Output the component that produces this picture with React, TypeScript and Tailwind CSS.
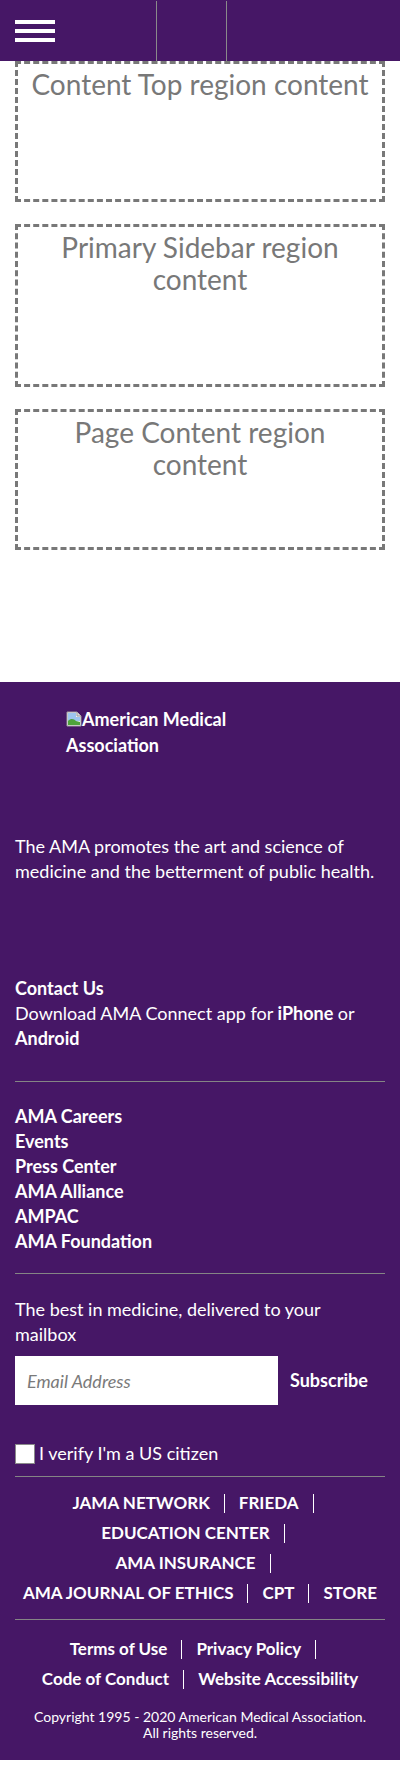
import type { ReactNode } from 'react';

const purple = 'bg-[#461766]';

const RegionBox = ({ title, height }: { title: string; height: string }) => {
  return (
    <div
      className={`border-[3px] border-dashed border-[#787878] text-center text-[28px] leading-[32px] text-[#787878] pt-[4px] px-[8px] ${height}`}
    >
      {title}
    </div>
  );
};

const Sep = () => (
  <span className="mx-[14px] inline-block h-[19px] w-px bg-white align-[-4px]"></span>
);

const LinkRow = ({ children }: { children: ReactNode }) => (
  <div className="flex items-center justify-center whitespace-nowrap">{children}</div>
);

const BrokenImage = () => (
  <svg width="16" height="16" viewBox="0 0 16 16" className="inline-block align-[-1px]">
    <path d="M1 1h10l4 4v10H1z" fill="#f4f4f4" stroke="#9a9a9a" strokeWidth="1" />
    <path d="M2 2h8v4h4v4H2z" fill="#9ec6ee" />
    <path d="M2 14V10c3-3 6-2 8 0l4 1v3z" fill="#4ea33b" />
    <path d="M11 1v4h4" fill="#dcdcdc" stroke="#9a9a9a" strokeWidth="1" />
  </svg>
);

const App = () => {
  return (
    <div className="w-[400px] bg-white font-['Lato',sans-serif]">
      {/* header */}
      <header className={`flex h-[61px] items-stretch ${purple}`}>
        <div className="flex w-[156px] items-center pl-[15px]">
          <button className="flex flex-col gap-[5px]" aria-label="Menu">
            <span className="block h-[4px] w-[40px] bg-white"></span>
            <span className="block h-[4px] w-[40px] bg-white"></span>
            <span className="block h-[4px] w-[40px] bg-white"></span>
          </button>
        </div>
        <div className="mt-px w-[71px] border-x border-[#8a8a8a]"></div>
      </header>

      {/* regions */}
      <main className="px-[15px] pb-[132px]">
        <RegionBox title="Content Top region content" height="h-[141px]" />
        <div className="mt-[22px]">
          <RegionBox title="Primary Sidebar region content" height="h-[163px]" />
        </div>
        <div className="mt-[22px]">
          <RegionBox title="Page Content region content" height="h-[141px]" />
        </div>
      </main>

      {/* footer */}
      <footer className={`${purple} px-[15px] pt-[24px] pb-[19px] text-white`}>
        <div className="ml-[51px] w-[200px] text-[18px] font-bold leading-[26px]">
          <BrokenImage />
          American Medical Association
        </div>

        <p className="mt-[76px] text-[18px] leading-[25px]">
          The AMA promotes the art and science of medicine and the betterment of public health.
        </p>

        <div className="mt-[92px] text-[18px] leading-[25px]">
          <a className="block font-bold">Contact Us</a>
          <p>
            Download AMA Connect app for <a className="font-bold">iPhone</a> or{' '}
            <a className="font-bold">Android</a>
          </p>
        </div>

        <hr className="mt-[30px] border-t border-[#858585]" />

        <ul className="mt-[22px] text-[18px] font-bold leading-[25px]">
          <li>AMA Careers</li>
          <li>Events</li>
          <li>Press Center</li>
          <li>AMA Alliance</li>
          <li>AMPAC</li>
          <li>AMA Foundation</li>
        </ul>

        <hr className="mt-[19px] border-t border-[#858585]" />

        <p className="mt-[23px] text-[18px] leading-[25px]">
          The best in medicine, delivered to your mailbox
        </p>
        <form className="mt-[9px] flex items-center">
          <input
            type="email"
            placeholder="Email Address"
            className="h-[49px] w-[263px] bg-white px-[12px] text-[18px] italic text-[#333] placeholder:text-[#7a7a7a] outline-none"
          />
          <button type="button" className="ml-[12px] text-[18px] font-bold">
            Subscribe
          </button>
        </form>
        <label className="mt-[36px] flex items-center text-[18px] leading-[25px]">
          <span className="mr-[4px] inline-block h-[20px] w-[20px] border border-[#8a8a8a] bg-white"></span>
          I verify I'm a US citizen
        </label>

        <hr className="mt-[10px] border-t border-[#858585]" />

        <nav className="mt-[11px] text-[17px] font-bold uppercase leading-[30px]">
          <LinkRow>
            JAMA Network<Sep />FRIEDA<Sep />
          </LinkRow>
          <LinkRow>
            Education Center<Sep />
          </LinkRow>
          <LinkRow>
            AMA Insurance<Sep />
          </LinkRow>
          <LinkRow>
            AMA Journal of Ethics<Sep />CPT<Sep />Store
          </LinkRow>
        </nav>

        <hr className="mt-[11px] border-t border-[#858585]" />

        <nav className="mt-[14px] text-[17px] font-bold leading-[30px]">
          <LinkRow>
            Terms of Use<Sep />Privacy Policy<Sep />
          </LinkRow>
          <LinkRow>
            Code of Conduct<Sep />Website Accessibility
          </LinkRow>
        </nav>

        <p className="mt-[15px] text-center text-[14px] leading-[16px]">
          Copyright 1995 - 2020 American Medical Association.
          <br />
          All rights reserved.
        </p>
      </footer>
    </div>
  );
};

export default App;
